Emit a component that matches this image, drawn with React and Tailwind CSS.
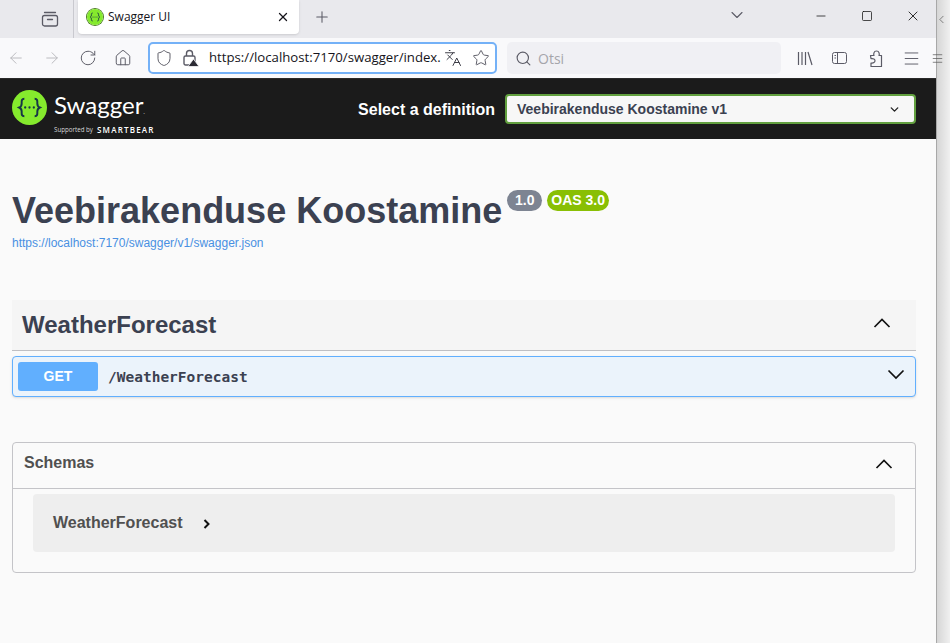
import React from 'react';
import { ArrowLeft, ArrowRight, RotateCw, Home, Shield, Star, Search, Menu, X, Plus, Minus, Square, ChevronDown, ChevronLeft, Languages } from 'lucide-react';

const ArchiveIcon = () => (
    <svg width="18" height="18" viewBox="0 0 18 18" fill="none" stroke="#5b5b66" strokeWidth="1.3">
        <rect x="1.5" y="5.5" width="15" height="10.5" rx="2" />
        <path d="M3.5 2.5h11M6.5 9.5h5" strokeLinecap="round" />
    </svg>
);

const LockWarn = () => (
    <svg width="16" height="18" viewBox="0 0 16 18" fill="none">
        <rect x="1" y="7" width="11" height="9" rx="1.5" stroke="#5b5b66" strokeWidth="1.4" />
        <path d="M3.5 7V4.5a3 3 0 0 1 6 0V7" stroke="#5b5b66" strokeWidth="1.4" />
        <path d="M10.5 10 16 17.5H5z" fill="#2b2a33" stroke="#f9f9fb" strokeWidth="0.8" />
    </svg>
);

const LibraryIcon = () => (
    <svg width="16" height="16" viewBox="0 0 16 16" fill="none" stroke="#5b5b66" strokeWidth="1.2">
        <path d="M1.500 2v13M5 2v13M8.500 2v13M11 2l4 13" />
    </svg>
);

const SidebarIcon = () => (
    <svg width="17" height="14" viewBox="0 0 17 14" fill="none" stroke="#5b5b66" strokeWidth="1">
        <rect x="1.500" y="1.500" width="14" height="11" rx="2" />
        <path d="M6.500 1.500v11M3.500 4.500h1.500M3.500 7h1.500" />
    </svg>
);

const PuzzleIcon = () => (
    <svg width="18" height="19" viewBox="0 0 18 19" fill="none" stroke="#5b5b66" strokeWidth="1.2" strokeLinejoin="round">
        <path d="M3.500 6.500h3.500c-.5-1-.5-4.500 2.500-4.500s3 3.500 2.500 4.500h2.500v11H4v-3.500c2.500.5 4-1 4-2.200s-1.500-2.600-4-2.100z" />
    </svg>
);

const SwaggerMark = ({ size, ink }) => (
    <svg width={size} height={size} viewBox="0 0 34 34" className="shrink-0">
        <circle cx="17" cy="17" r="17" fill="#85ea2d" />
        <path d="M12 8.500c-3 0-2.600 2.400-2.600 4.500 0 2.200-1 3.400-2.400 4 1.400.6 2.400 1.800 2.400 4 0 2.100-.4 4.500 2.600 4.500M22 8.500c3 0 2.600 2.400 2.600 4.500 0 2.200 1 3.400 2.400 4-1.400.6-2.400 1.800-2.400 4 0 2.100.4 4.500-2.600 4.500" fill="none" stroke={ink} strokeWidth="1.900" />
        <circle cx="12.800" cy="17" r="1.100" fill={ink} />
        <circle cx="17" cy="17" r="1.100" fill={ink} />
        <circle cx="21.200" cy="17" r="1.100" fill={ink} />
    </svg>
);

const Chevron = ({ up, className }) => (
    <svg width="20" height="20" viewBox="0 0 20 20" fill="none" stroke="#111" strokeWidth="1.700" className={className}>
        <path d={up ? 'M2.500 14 10 6.500 17.500 14' : 'M2.500 6.500 10 14 17.500 6.500'} />
    </svg>
);

const Browser = () => (
    <div className="font-['Open_Sans',sans-serif]">
        <div className="h-[38px] bg-[#e9e9ed] flex items-start">
            <div className="w-[74px] h-[38px] border-r border-[#c9c9cf] flex items-center justify-end pr-[14px]">
                <ArchiveIcon />
            </div>
            <div className="ml-[4px] w-[221px] h-[34px] bg-white rounded-b-[4px] shadow-sm flex items-center pl-[9px] pr-[9px]">
                <span className="flex rounded-full ring-1 ring-[#4a7a22]"><SwaggerMark size={16} ink="#173647" /></span>
                <span className="ml-[5px] flex-1 text-[12px] text-[#15141a]">Swagger UI</span>
                <X size={14} strokeWidth={2.200} color="#15141a" />
            </div>
            <Plus size={18} strokeWidth={1.400} color="#5b5b66" className="ml-[14px] mt-[8px]" />
            <ChevronDown size={20} strokeWidth={1.300} color="#5b5b66" className="ml-[396px] mt-[5px]" />
            <Minus size={14} strokeWidth={1.300} color="#111" className="ml-[67px] mt-[9px]" />
            <Square size={12} strokeWidth={1.500} color="#111" className="ml-[33px] mt-[10px]" />
            <X size={16} strokeWidth={1.300} color="#111" className="ml-[32px] mt-[8px]" />
        </div>
        <div className="h-[40px] bg-[#f9f9fb] flex items-center">
            <ArrowLeft size={18} strokeWidth={1.200} color="#b4b4b9" className="ml-[7px]" />
            <ArrowRight size={18} strokeWidth={1.200} color="#b4b4b9" className="ml-[18px]" />
            <RotateCw size={18} strokeWidth={1.300} color="#5b5b66" className="ml-[18px]" />
            <Home size={18} strokeWidth={1.300} color="#5b5b66" className="ml-[17px]" />
            <div className="ml-[16px] w-[349px] h-[32px] bg-white border-2 border-[#74b1f7] rounded-[5px] flex items-center pl-[5px]">
                <Shield size={18} strokeWidth={1.300} color="#5b5b66" />
                <span className="ml-[10px] flex"><LockWarn /></span>
                <span className="ml-[10px] w-[232px] text-[13.200px] text-[#15141a] whitespace-nowrap">https://localhost:7170/swagger/index.</span>
                <Languages size={18} strokeWidth={1.300} color="#3a3a44" className="ml-[3px]" />
                <Star size={18} strokeWidth={1.300} color="#5b5b66" className="ml-[10px]" />
            </div>
            <div className="ml-[10px] w-[274px] h-[32px] bg-[#f0f0f4] rounded-[5px] flex items-center pl-[8px]">
                <Search size={17} strokeWidth={1.600} color="#5b5b66" />
                <span className="ml-[6px] text-[14px] text-[#a5a5ab]">Otsi</span>
            </div>
            <span className="ml-[16px] flex"><LibraryIcon /></span>
            <span className="ml-[18px] flex"><SidebarIcon /></span>
            <span className="ml-[19px] flex"><PuzzleIcon /></span>
            <Menu size={19} strokeWidth={1.200} color="#5b5b66" className="ml-[17px]" />
        </div>
        <div className="h-px bg-[#2a2a2a]" />
    </div>
);

const SwaggerHeader = () => (
    <div className="h-[60px] bg-[#1b1b1b] flex items-center pl-[12px] pr-[20px]">
        <div className="-mt-[4px]"><SwaggerMark size={35} ink="#173647" /></div>
        <div className="ml-[7px] mt-[7px] flex flex-col text-white">
            <span className="font-['Lato',sans-serif] font-normal text-[24px] leading-[27px]">Swagger<span className="text-[5px]">.</span></span>
            <span className="flex items-center gap-[4px] -mt-[1px] leading-[9px] font-['Open_Sans',sans-serif]">
                <span className="text-[6.200px] text-[#d8d8d8]">Supported by</span>
                <span className="text-[8px] font-semibold tracking-[1.200px]">SMARTBEAR</span>
            </span>
        </div>
        <div className="ml-auto flex items-center">
            <span className="text-[16px] font-bold text-white mr-[10px] mt-[1px]">Select a definition</span>
            <div className="w-[411px] h-[30px] bg-[#f7f7f7] border-2 border-[#62a03f] rounded-[4px] flex items-center justify-between pl-[10px] pr-[13px]">
                <span className="text-[14px] font-bold text-[#3b4151]">Veebirakenduse Koostamine v1</span>
                <ChevronDown size={13} strokeWidth={2.500} color="#222" />
            </div>
        </div>
    </div>
);

const Content = () => (
    <div className="flex-1 bg-[#fafafa] px-[12px] pr-[20px] overflow-hidden">
        <div className="pt-[47px] flex items-start">
            <h1 className="text-[36px] leading-[50px] font-bold text-[#3b4151]">Veebirakenduse Koostamine</h1>
            <span className="ml-[5px] mt-[4px] h-[21px] w-[35px] bg-[#7d8492] rounded-full text-white text-[14px] font-bold flex items-center justify-center">1.0</span>
            <span className="ml-[5px] mt-[4px] h-[21px] w-[62px] bg-[#89bf04] rounded-full text-white text-[14px] font-bold flex items-center justify-center">OAS 3.0</span>
        </div>
        <a className="block text-[12px] leading-[14px] text-[#4990e2]">https://localhost:7170/swagger/v1/swagger.json</a>

        <div className="mt-[50px] h-[51px] bg-[#f5f5f5] border-b border-[#bfbfc3] flex items-center justify-between pl-[10px] pr-[24px]">
            <h3 className="text-[24px] font-bold text-[#3b4151]">WeatherForecast</h3>
            <Chevron up className="-mt-[4px]" />
        </div>
        <div className="mt-[5px] h-[41px] bg-[#ebf3fb] border border-[#61affe] rounded-[4px] shadow-sm flex items-center pl-[5px] pr-[9px]">
            <span className="w-[80px] h-[29px] bg-[#61affe] rounded-[3px] text-white text-[14px] font-bold flex items-center justify-center">GET</span>
            <span className="ml-[10px] mt-[2px] flex-1 text-[14.500px] font-bold text-[#3b4151] font-['DejaVu_Sans_Mono',monospace]">/WeatherForecast</span>
            <Chevron className="-mt-[6px]" />
        </div>

        <div className="mt-[45px] h-[131px] border border-[#c4c4c8] rounded-[4px] flex flex-col">
            <div className="h-[46px] shrink-0 border-b border-[#c4c4c8] flex items-center justify-between pl-[11px] pr-[21px]">
                <h4 className="text-[16px] font-bold text-[#505050] -mt-[6px]">Schemas</h4>
                <Chevron up className="-mt-[4px]" />
            </div>
            <div className="mx-[20px] mt-[5px] h-[58px] bg-[#eeeeee] rounded-[4px] flex items-center pl-[20px]">
                <span className="text-[16px] font-bold text-[#505050]">WeatherForecast</span>
                <svg width="8" height="10" viewBox="0 0 8 10" fill="none" stroke="#111" strokeWidth="2" className="ml-[20px] mt-[2px]">
                    <path d="M1.500 1 5.500 5 1.500 9" />
                </svg>
            </div>
        </div>
    </div>
);

export default function App() {
    return (
        <div className="w-[950px] h-[643px] flex overflow-hidden font-['Liberation_Sans',Arial,sans-serif] bg-white">
            <div className="w-[936px] h-full flex flex-col">
                <Browser />
                <SwaggerHeader />
                <Content />
            </div>
            <div className="w-[14px] h-full border-l border-[#a8a8a8] bg-linear-to-r from-[#d6d6d6] to-[#f0f0f0] flex flex-col">
                <div className="h-[38px] flex items-center">
                    <ChevronLeft size={13} strokeWidth={1.300} color="#555" className="-ml-[2px]" />
                </div>
                <div className="h-[40px] flex items-center">
                    <Menu size={13} strokeWidth={1.300} color="#555" className="-ml-[6px]" />
                </div>
            </div>
        </div>
    );
}
